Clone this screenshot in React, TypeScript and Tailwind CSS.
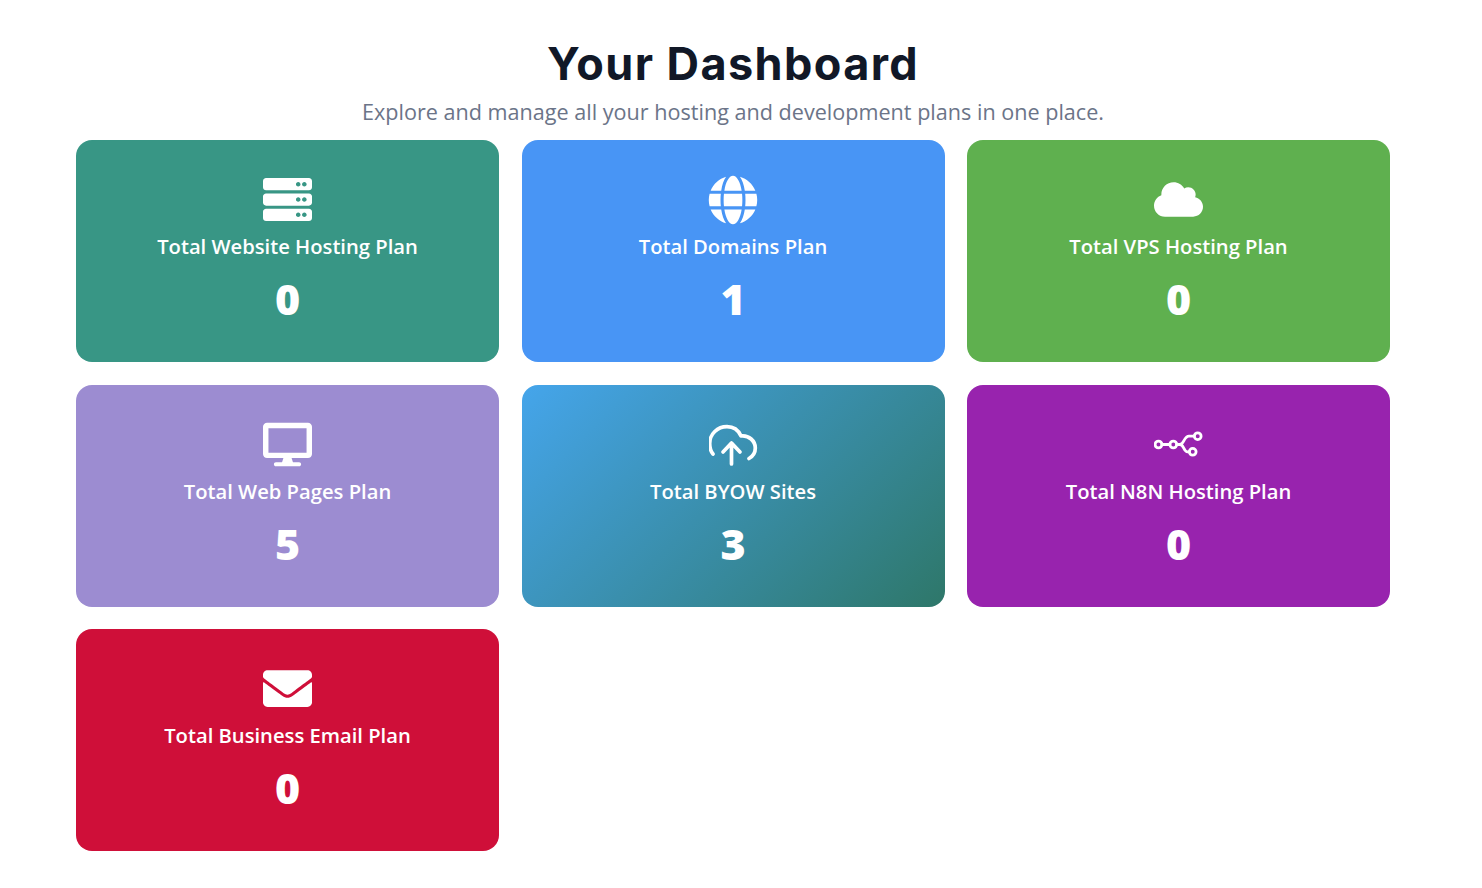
import React from "react";
import { FaServer, FaGlobe, FaCloud, FaDesktop, FaEnvelope } from "react-icons/fa";

const N8n = () => (
  <svg width="49" height="28" viewBox="0 0 49 28" fill="none" stroke="white" strokeWidth="2.8" strokeLinecap="round">
    <circle cx="4.500" cy="14.500" r="3.400" />
    <circle cx="19.300" cy="14.500" r="3.400" />
    <path d="M7.900 14.500h8M22.700 14.500h3.300c4 0 4-8.300 9-8.300h5.200M26 14.500c4 0 3.500 7.300 7.500 7.300h1.800" />
    <circle cx="43.700" cy="6.200" r="3.400" />
    <circle cx="38.700" cy="21.800" r="3.400" />
  </svg>
);

const Upload = () => (
  <svg width="49" height="49" viewBox="1 0 49 49" fill="none" stroke="white" strokeWidth="3.700" strokeLinecap="round" strokeLinejoin="round">
    <path d="M5 34C2.500 31 1.700 27 1.700 23.500 1.700 14 9.500 6.700 19 6.700c6.500 0 11.500 3.800 14 9.300 8-1 14.300 5 14.300 12 0 4.500-2.800 8.500-6.300 10.500" />
    <path d="M23.500 44V23M15 32l8.500-9 8.500 9" />
  </svg>
);

const cards = [
  { title: "Total Website Hosting Plan", n: "0", bg: "bg-[#389685]", icon: <FaServer size={49} color="white" /> },
  { title: "Total Domains Plan", n: "1", bg: "bg-[#4895f5]", icon: <FaGlobe size={50} color="white" /> },
  { title: "Total VPS Hosting Plan", n: "0", bg: "bg-[#5fb04f]", icon: <FaCloud size={49} color="white" /> },
  { title: "Total Web Pages Plan", n: "5", bg: "bg-[#9c8cd1]", icon: <FaDesktop size={49} color="white" /> },
  { title: "Total BYOW Sites", n: "3", bg: "bg-[linear-gradient(135deg,#45a5eb,#2e7769)]", icon: <Upload /> },
  { title: "Total N8N Hosting Plan", n: "0", bg: "bg-[#9823ae]", icon: <N8n /> },
  { title: "Total Business Email Plan", n: "0", bg: "bg-[#cf0f39]", icon: <FaEnvelope size={49} color="white" /> },
];

export default function App() {
  return (
    <div className="min-h-[888px] bg-white pl-[76px] pt-[37px] font-['Open_Sans',sans-serif]">
      <div className="w-[1314px]">
        <h1 className="text-center font-['Inter',sans-serif] text-[45px] leading-[54px] font-bold tracking-[1.4px] text-[#111827]">Your Dashboard</h1>
        <p className="mt-[6px] text-center text-[21.6px] leading-[30px] text-[#6b7488]">Explore and manage all your hosting and development plans in one place.</p>
        <div className="mt-[13px] grid grid-cols-3 gap-[22.5px]">
          {cards.map((c) => (
            <div key={c.title} className={`flex h-[222px] flex-col items-center rounded-[16px] pt-[35px] text-white ${c.bg}`}>
              <div className="flex h-[49px] items-center justify-center">{c.icon}</div>
              <div className="mt-[7px] text-[20.2px] leading-[30px] font-semibold">{c.title}</div>
              <div className="mt-[10px] text-[43px] leading-[56px] font-extrabold">{c.n}</div>
            </div>
          ))}
        </div>
      </div>
    </div>
  );
}
